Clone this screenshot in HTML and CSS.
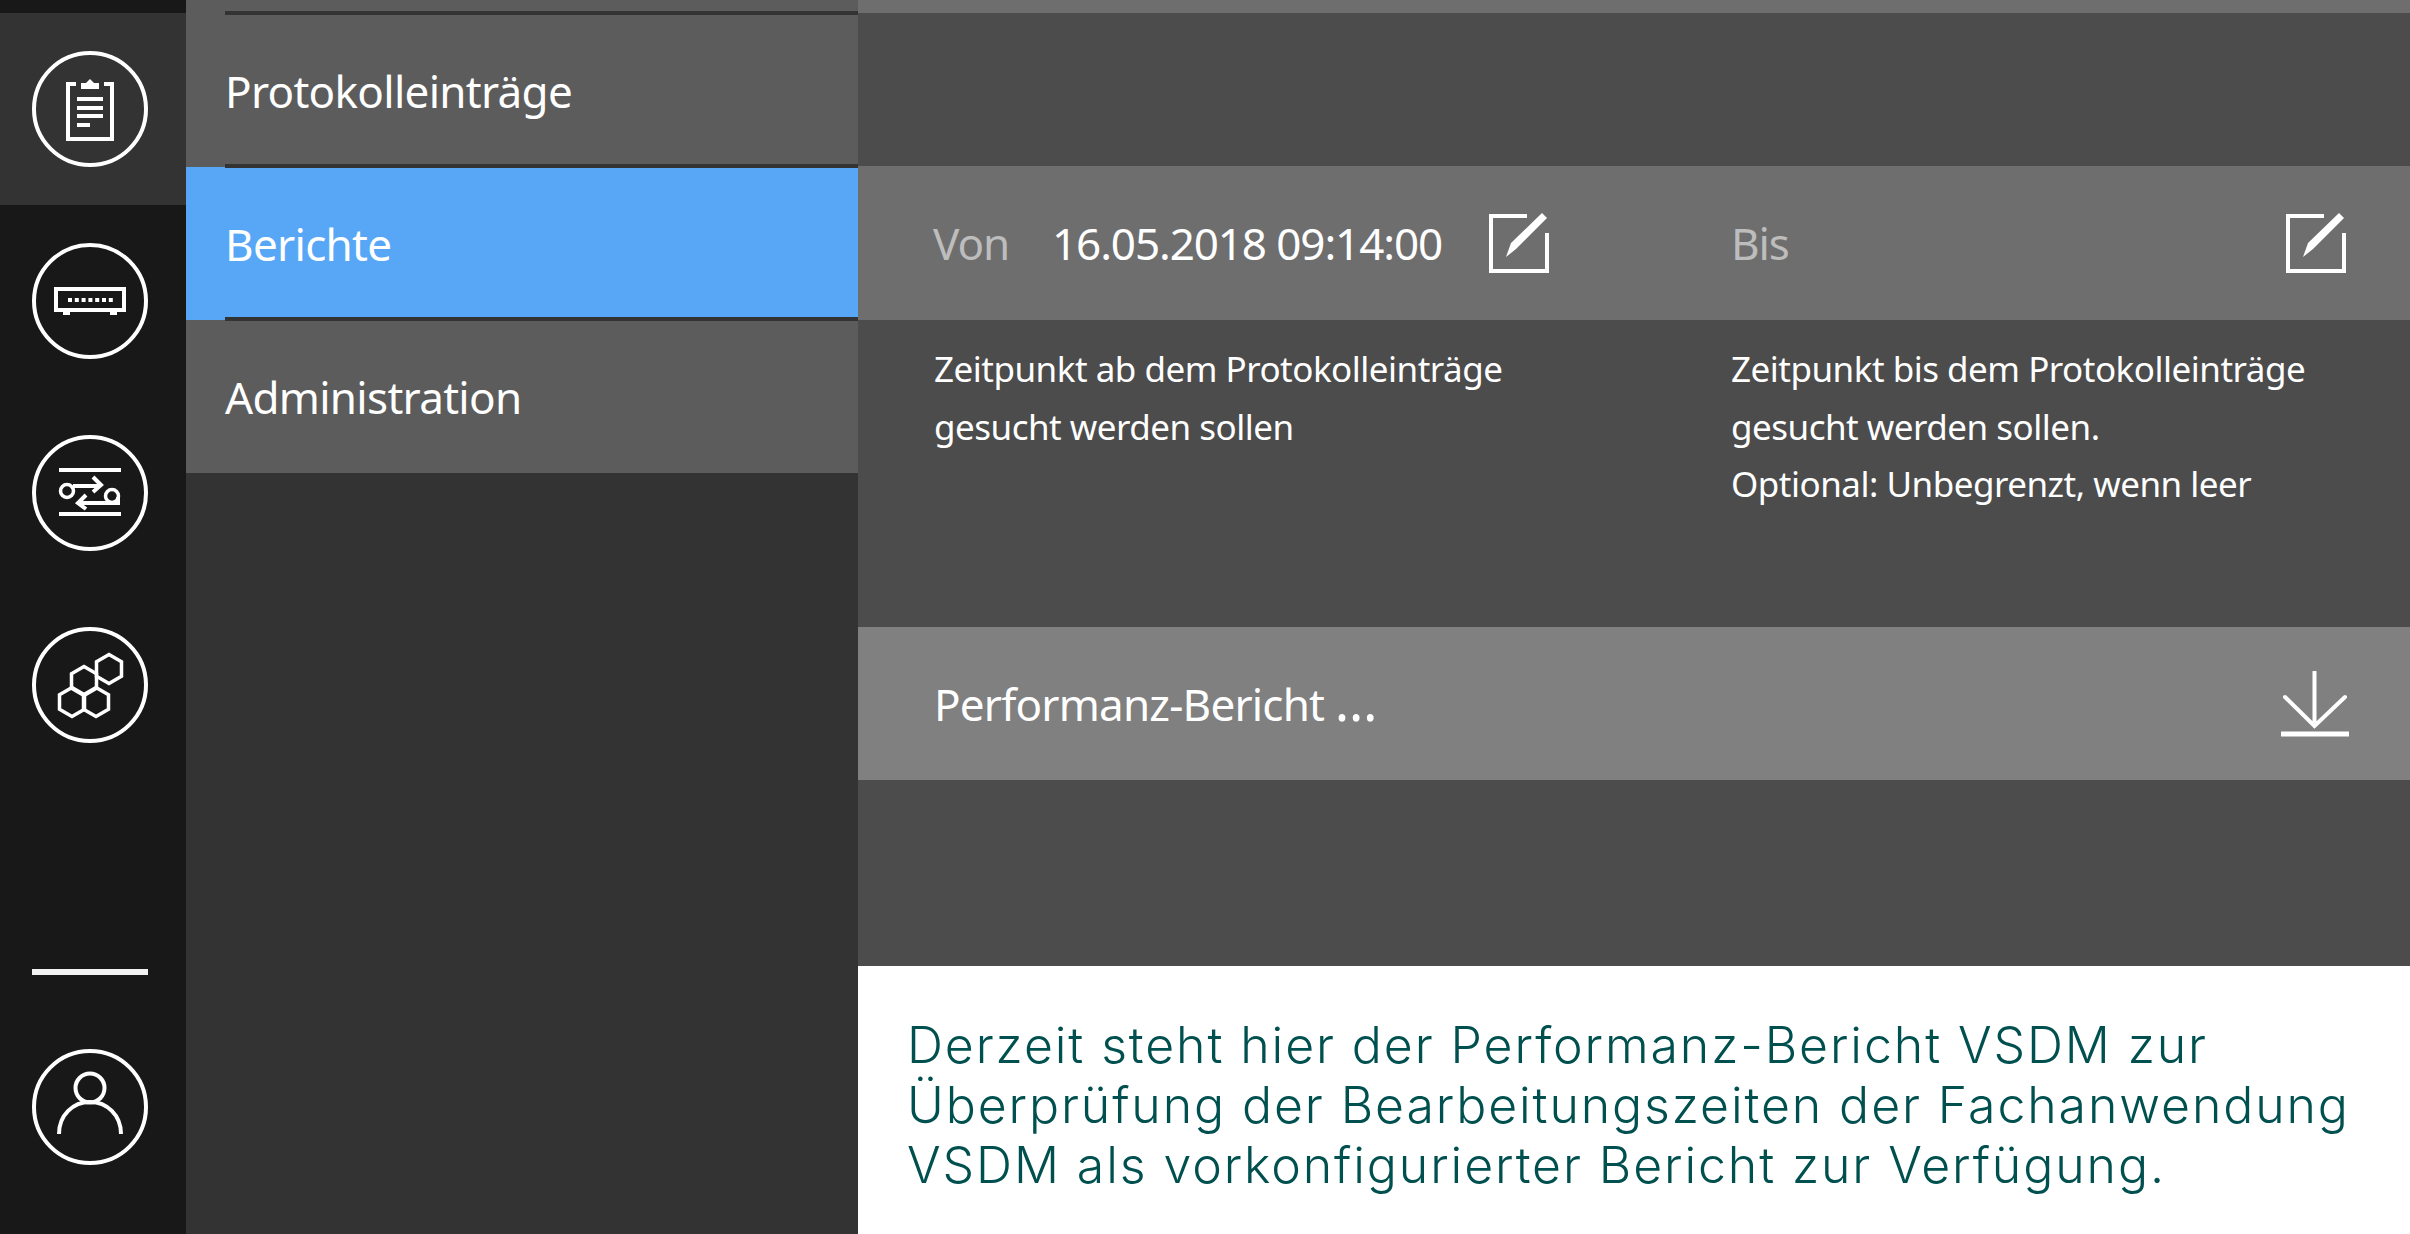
FILE: index.html
```html
<!DOCTYPE html>
<html lang="de">
<head>
    <meta charset="UTF-8">
    <title>Berichte</title>
    <link rel="stylesheet" href="styles.css">
</head>
<body>
    <aside class="rail">
        <div class="rail-top"></div>
        <a class="rail-item active">
            <svg class="rail-icon" viewBox="0 0 116 116">
                <circle cx="58" cy="58" r="56"/>
                <path d="M44 33H36V88H80V33H72"/>
                <path class="solid" d="M49 38V32H54L58 28L62 32H67V38Z"/>
                <path d="M45 48H71M45 57H71M45 65H71M45 74H58"/>
            </svg>
        </a>
        <a class="rail-item">
            <svg class="rail-icon" viewBox="0 0 116 116">
                <circle cx="58" cy="58" r="56"/>
                <rect x="24" y="46" width="68" height="21"/>
                <path class="dots" d="M36 57H82"/>
                <path class="solid" d="M31 69H38V72H31ZM78 69H85V72H78Z"/>
            </svg>
        </a>
        <a class="rail-item">
            <svg class="rail-icon" viewBox="0 0 116 116">
                <circle cx="58" cy="58" r="56"/>
                <path d="M27 35H89M27 79H89"/>
                <circle class="thin" cx="35" cy="56" r="6.500"/>
                <path d="M41 51H68M61 42L69 50L61 57"/>
                <circle class="thin" cx="80" cy="61" r="6.500"/>
                <path d="M86 62V68H47M54 60L46 68L54 74"/>
            </svg>
        </a>
        <a class="rail-item">
            <svg class="rail-icon hex" viewBox="0 0 116 116">
                <circle cx="58" cy="58" r="56"/>
                <path d="M77 27.500L89.500 34.750V49.250L77 56.500L64.500 49.250V34.750Z"/>
                <path d="M52 39.500L64.500 46.750V61.250L52 68.500L39.500 61.250V46.750Z"/>
                <path d="M40 60.500L52.500 67.750V82.250L40 89.500L27.500 82.250V67.750Z"/>
                <path d="M64 60.500L76.500 67.750V82.250L64 89.500L51.500 82.250V67.750Z"/>
            </svg>
        </a>
        <div class="rail-bottom">
            <div class="rail-divider"></div>
            <svg class="rail-icon" viewBox="0 0 116 116">
                <circle cx="58" cy="58" r="56"/>
                <circle cx="58" cy="39" r="14.500"/>
                <path d="M27 85C27 66 41 53 58 53C75 53 89 66 89 85"/>
            </svg>
        </div>
    </aside>

    <nav class="subnav">
        <div class="subnav-stub"></div>
        <a class="subnav-item">Protokolleinträge</a>
        <a class="subnav-item selected">Berichte</a>
        <a class="subnav-item">Administration</a>
    </nav>

    <main class="content">
        <div class="top-strip"></div>
        <div class="fields">
            <div class="field">
                <span class="field-label">Von</span>
                <span class="field-value">16.05.2018 09:14:00</span>
                <svg class="edit-icon" viewBox="0 0 60 60">
                    <path d="M38 3H2V58H58V20"/>
                    <path class="solid" d="M17 44L22 30L53 0L58 5L27 36Z"/>
                </svg>
            </div>
            <div class="field to">
                <span class="field-label">Bis</span>
                <svg class="edit-icon" viewBox="0 0 60 60">
                    <path d="M38 3H2V58H58V20"/>
                    <path class="solid" d="M17 44L22 30L53 0L58 5L27 36Z"/>
                </svg>
            </div>
        </div>
        <div class="hints">
            <p>Zeitpunkt ab dem Protokolleinträge<br>gesucht werden sollen</p>
            <p>Zeitpunkt bis dem Protokolleinträge<br>gesucht werden sollen.<br>Optional: Unbegrenzt, wenn leer</p>
        </div>
        <div class="report-row">
            <span class="report-name">Performanz-Bericht <span class="ellipsis">…</span></span>
            <svg class="download-icon" viewBox="0 0 68 66">
                <path d="M33.500 1V55M4 26L33.500 55L64 26"/>
                <path class="base" d="M0 63H68"/>
            </svg>
        </div>
        <div class="caption">
            Derzeit steht hier der Performanz-Bericht VSDM zur<br>
            Überprüfung der Bearbeitungszeiten der Fachanwendung<br>
            VSDM als vorkonfigurierter Bericht zur Verfügung.
        </div>
    </main>
</body>
</html>
```

FILE: styles.css
```css
* {
    box-sizing: border-box;
}
body {
    margin: 0;
    height: 100vh;
    overflow: hidden;
    display: flex;
    font-family: "Noto Sans", sans-serif;
    color: #fff;
    background: #333;
}

/* left icon rail */
.rail {
    width: 186px;
    display: flex;
    flex-direction: column;
    background: #181818;
}
.rail-top {
    height: 13px;
}
.rail-item {
    height: 192px;
    padding-right: 6px;
    display: flex;
    align-items: center;
    justify-content: center;
}
.rail-item.active {
    background: #333;
}
.rail-icon {
    width: 116px;
    height: 116px;
    fill: none;
    stroke: #fff;
    stroke-width: 4;
}
.rail-icon .solid {
    fill: #fff;
    stroke: none;
}
.rail-icon .thin {
    stroke-width: 3.5;
}
.rail-icon .dots {
    stroke-width: 4;
    stroke-dasharray: 4 2.800;
}
.hex path {
    stroke-width: 3.500;
}
.rail-bottom {
    margin-top: auto;
    padding: 0 6px 69px 0;
    display: flex;
    flex-direction: column;
    align-items: center;
}
.rail-divider {
    width: 116px;
    height: 6px;
    background: #f2f2f2;
    margin-bottom: 74px;
}

/* second level menu */
.subnav {
    width: 672px;
    background: #333;
}
.subnav-stub {
    height: 14px;
    background: #5c5c5c;
}
.subnav-item {
    position: relative;
    height: 153px;
    display: flex;
    align-items: center;
    padding-left: 39px;
    background: #5c5c5c;
    font-size: 44px;
    letter-spacing: -0.700px;
}
.subnav-item::before {
    content: "";
    position: absolute;
    top: -3px;
    left: 39px;
    right: 0;
    height: 4px;
    background: #333;
}
.subnav-item.selected {
    background: #58a7f7;
}

/* main panel */
.content {
    flex: 1;
    display: flex;
    flex-direction: column;
    background: #4c4c4c;
}
.top-strip {
    height: 13px;
    background: #6e6e6e;
    margin-bottom: 153px;
}
.fields {
    height: 154px;
    display: grid;
    grid-template-columns: 755px 752px;
    column-gap: 45px;
    background: #6e6e6e;
}
.field {
    display: flex;
    align-items: center;
    padding: 0 64px 0 75px;
    font-size: 44px;
    letter-spacing: -1.100px;
}
.field.to {
    padding-left: 73px;
}
.field-label {
    width: 119px;
    color: #bdbdbd;
}
.edit-icon {
    width: 60px;
    height: 60px;
    margin-left: auto;
    fill: none;
    stroke: #fff;
    stroke-width: 4;
}
.edit-icon .solid {
    fill: #fff;
    stroke: none;
}
.hints {
    height: 307px;
    display: grid;
    grid-template-columns: 752px 752px;
    column-gap: 45px;
    padding: 20px 0 0 1px;
    font-size: 35px;
    line-height: 57.500px;
    letter-spacing: -0.500px;
}
.hints p {
    margin: 0;
    padding-left: 75px;
}
.report-row {
    height: 153px;
    display: flex;
    align-items: center;
    justify-content: space-between;
    padding: 0 61px 0 76px;
    background: #808080;
    font-size: 44px;
    letter-spacing: -0.800px;
}
.ellipsis {
    font-size: 54px;
    line-height: 0;
}
.download-icon {
    width: 68px;
    height: 66px;
    fill: none;
    stroke: #fff;
    stroke-width: 4;
    stroke-linecap: round;
}
.download-icon .base {
    stroke-width: 5;
    stroke-linecap: butt;
}
.caption {
    margin-top: auto;
    height: 268px;
    padding: 49px 0 0 49px;
    background: #fff;
    color: #00504f;
    font-family: "Inter", sans-serif;
    font-size: 50px;
    font-weight: 350;
    line-height: 60px;
    letter-spacing: 1.900px;
    white-space: nowrap;
}
```
